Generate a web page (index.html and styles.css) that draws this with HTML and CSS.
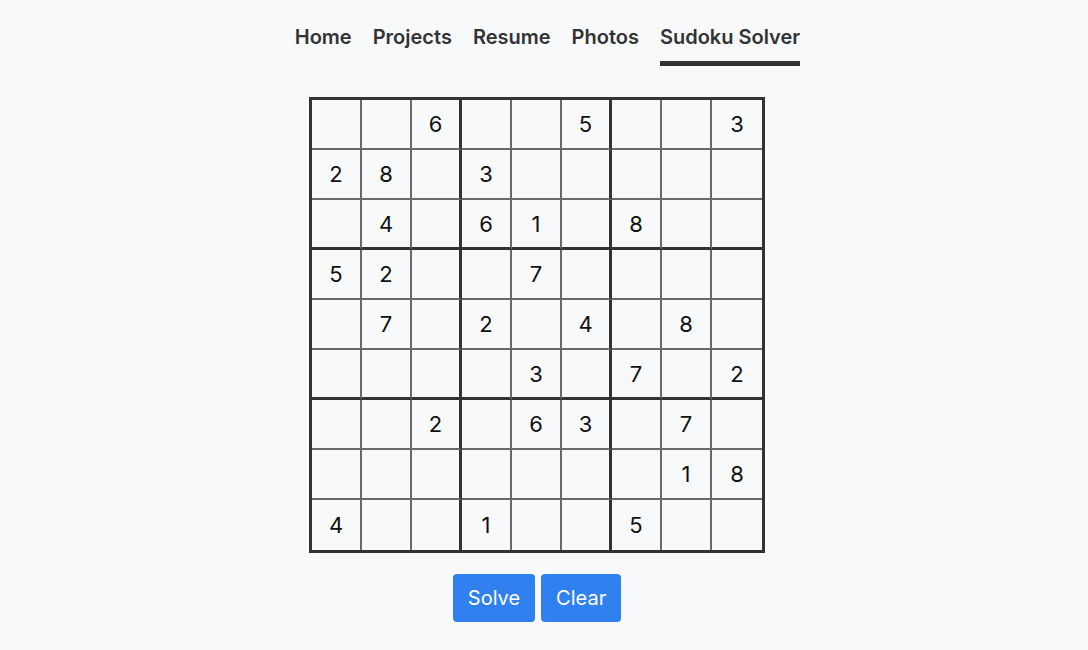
FILE: index.html
```html
<!DOCTYPE html>
<html lang="en">
<head>
<meta charset="utf-8">
<title>Sudoku Solver</title>
<link rel="stylesheet" href="styles.css">
</head>
<body>
<div class="page">
  <nav class="nav">
    <a class="nav-item" href="#">Home</a>
    <a class="nav-item" href="#">Projects</a>
    <a class="nav-item" href="#">Resume</a>
    <a class="nav-item" href="#">Photos</a>
    <a class="nav-item active" href="#">Sudoku Solver</a>
  </nav>
  <main class="main">
    <div class="board">
      <div class="cell"></div><div class="cell"></div><div class="cell"><span>6</span></div><div class="cell"></div><div class="cell"></div><div class="cell"><span>5</span></div><div class="cell"></div><div class="cell"></div><div class="cell"><span>3</span></div>
      <div class="cell"><span>2</span></div><div class="cell"><span>8</span></div><div class="cell"></div><div class="cell"><span>3</span></div><div class="cell"></div><div class="cell"></div><div class="cell"></div><div class="cell"></div><div class="cell"></div>
      <div class="cell"></div><div class="cell"><span>4</span></div><div class="cell"></div><div class="cell"><span>6</span></div><div class="cell"><span>1</span></div><div class="cell"></div><div class="cell"><span>8</span></div><div class="cell"></div><div class="cell"></div>
      <div class="cell"><span>5</span></div><div class="cell"><span>2</span></div><div class="cell"></div><div class="cell"></div><div class="cell"><span>7</span></div><div class="cell"></div><div class="cell"></div><div class="cell"></div><div class="cell"></div>
      <div class="cell"></div><div class="cell"><span>7</span></div><div class="cell"></div><div class="cell"><span>2</span></div><div class="cell"></div><div class="cell"><span>4</span></div><div class="cell"></div><div class="cell"><span>8</span></div><div class="cell"></div>
      <div class="cell"></div><div class="cell"></div><div class="cell"></div><div class="cell"></div><div class="cell"><span>3</span></div><div class="cell"></div><div class="cell"><span>7</span></div><div class="cell"></div><div class="cell"><span>2</span></div>
      <div class="cell"></div><div class="cell"></div><div class="cell"><span>2</span></div><div class="cell"></div><div class="cell"><span>6</span></div><div class="cell"><span>3</span></div><div class="cell"></div><div class="cell"><span>7</span></div><div class="cell"></div>
      <div class="cell"></div><div class="cell"></div><div class="cell"></div><div class="cell"></div><div class="cell"></div><div class="cell"></div><div class="cell"></div><div class="cell"><span>1</span></div><div class="cell"><span>8</span></div>
      <div class="cell"><span>4</span></div><div class="cell"></div><div class="cell"></div><div class="cell"><span>1</span></div><div class="cell"></div><div class="cell"></div><div class="cell"><span>5</span></div><div class="cell"></div><div class="cell"></div>
    </div>
    <div class="actions">
      <button class="btn" type="button">Solve</button>
      <button class="btn" type="button">Clear</button>
    </div>
  </main>
</div>
</body>
</html>
```

FILE: styles.css
```css
* { box-sizing: border-box; }
html, body { margin: 0; padding: 0; }
body {
  background: #f8f9fa;
  color: #333;
  font-family: Inter, "Noto Sans", "Liberation Sans", sans-serif;
  width: 1088px;
  height: 650px;
  overflow: hidden;
}
.page {
  width: 1074px;
  display: flex;
  flex-direction: column;
  align-items: center;
}
.nav {
  display: flex;
  gap: 21px;
  padding-top: 25px;
  margin-left: 21px;
}
.nav-item {
  font-size: 20px;
  font-weight: 600;
  line-height: 25px;
  color: #333;
  text-decoration: none;
  padding-bottom: 11px;
  border-bottom: 5px solid transparent;
}
.nav-item.active { border-bottom-color: #333; }
.main {
  margin-top: 31px;
  display: flex;
  flex-direction: column;
  align-items: center;
}
.board {
  display: grid;
  grid-template-columns: repeat(9, 50px);
  grid-template-rows: repeat(9, 50px);
  border: 3px solid #333;
}
.cell {
  display: flex;
  align-items: center;
  justify-content: center;
  border-right: 2px solid #6a6a6a;
  border-bottom: 2px solid #6a6a6a;
  font-size: 22px;
  color: #111;
}
.cell:nth-child(9n) { border-right: none; }
.cell:nth-child(9n+3), .cell:nth-child(9n+6) { border-right: 3px solid #333; }
.cell:nth-child(n+19):nth-child(-n+27),
.cell:nth-child(n+46):nth-child(-n+54) { border-bottom: 3px solid #333; }
.cell:nth-child(n+73) { border-bottom: none; }
.actions {
  display: flex;
  gap: 6px;
  margin-top: 21px;
}
.btn {
  font-family: Inter, "Noto Sans", "Liberation Sans", sans-serif;
  font-size: 20px;
  color: #fff;
  background: #3180f0;
  border: none;
  border-radius: 4px;
  height: 48px;
  padding: 0 15px;
  cursor: pointer;
}
```
